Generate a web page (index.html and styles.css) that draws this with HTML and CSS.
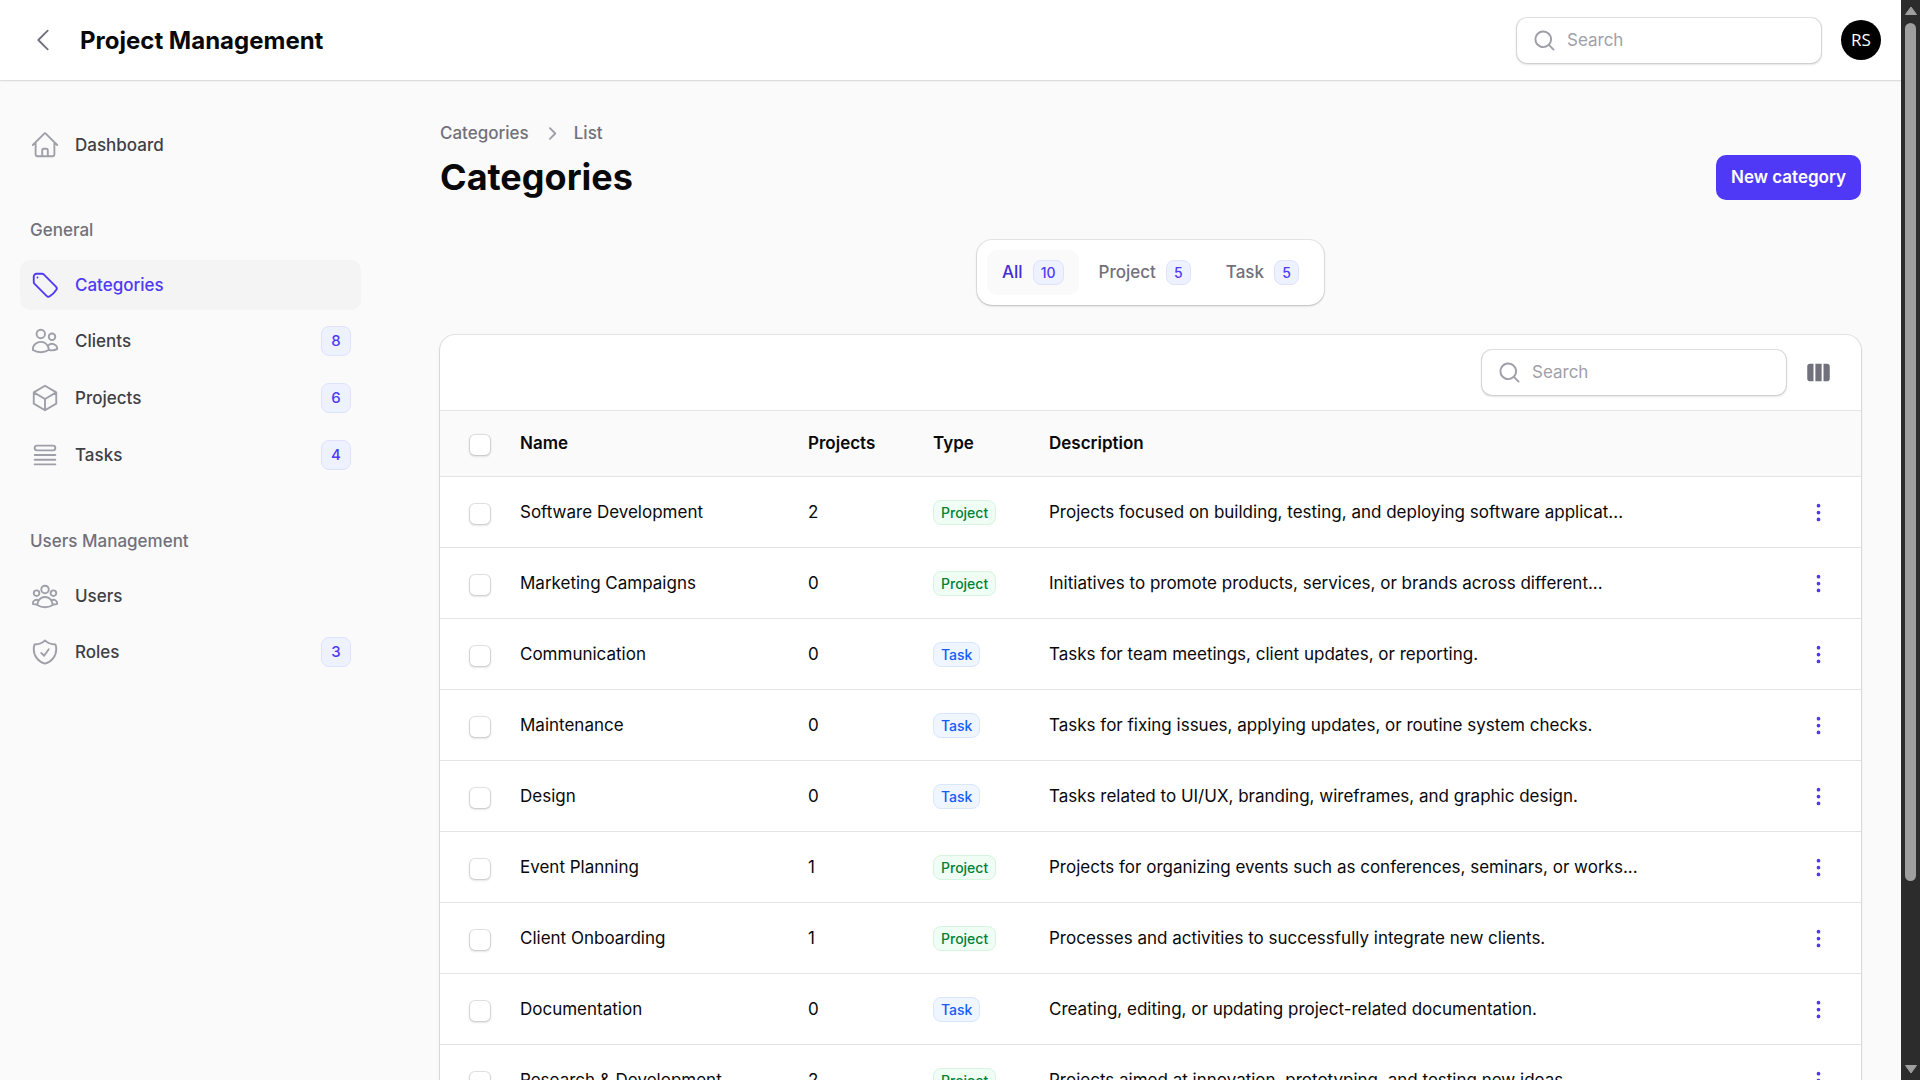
FILE: index.html
```html
<!DOCTYPE html>
<html lang="en">
<head>
<meta charset="utf-8">
<meta name="viewport" content="width=device-width, initial-scale=1">
<title>Categories - Project Management</title>
<link rel="stylesheet" href="styles.css">
</head>
<body>
<svg class="sprite" aria-hidden="true">
  <symbol id="i-search" viewBox="0 0 20 20"><path fill="currentColor" fill-rule="evenodd" d="M9 3.5a5.5 5.5 0 1 0 0 11 5.5 5.5 0 0 0 0-11ZM2 9a7 7 0 1 1 12.452 4.391l3.328 3.329a.75.75 0 1 1-1.06 1.06l-3.329-3.328A7 7 0 0 1 2 9Z"/></symbol>
  <symbol id="i-dots" viewBox="0 0 20 20"><path fill="currentColor" d="M10 3a1.5 1.5 0 1 1 0 3 1.5 1.5 0 0 1 0-3ZM10 8.500a1.500 1.500 0 1 1 0 3 1.500 1.500 0 0 1 0-3ZM11.500 15.500a1.500 1.500 0 1 0-3 0 1.500 1.500 0 0 0 3 0Z"/></symbol>
  <symbol id="i-columns" viewBox="0 0 20 20"><path fill="currentColor" d="M14 17h2.75A2.25 2.25 0 0 0 19 14.75v-9.500A2.250 2.250 0 0 0 16.750 3H14v14ZM12.500 3h-5v14h5V3ZM3.250 3H6v14H3.250A2.250 2.250 0 0 1 1 14.750v-9.500A2.250 2.250 0 0 1 3.250 3Z"/></symbol>
</svg>
<div class="window">
  <div class="viewport">
    <header class="topbar">
      <button class="back" type="button" aria-label="Collapse sidebar"><svg class="icon-lg line" viewBox="0 0 24 24"><path d="M15.750 19.500 8.250 12l7.500-7.500"/></svg></button>
      <a class="brand" href="#">Project Management</a>
      <label class="search"><svg class="icon"><use href="#i-search"/></svg><input type="search" placeholder="Search" aria-label="Global search"></label>
      <button class="avatar" type="button" aria-label="User menu">RS</button>
    </header>
    <div class="layout">
      <nav class="sidebar" aria-label="Main">
        <div class="group">
          <a class="nav-item" href="#"><svg class="icon-lg line" viewBox="0 0 24 24"><path d="m2.250 12 8.954-8.955c.44-.439 1.152-.439 1.591 0L21.750 12M4.500 9.750v10.125c0 .621.504 1.125 1.125 1.125H9.750v-4.875c0-.621.504-1.125 1.125-1.125h2.250c.621 0 1.125.504 1.125 1.125V21h4.125c.621 0 1.125-.504 1.125-1.125V9.750M8.250 21h8.250"/></svg><span>Dashboard</span></a>
        </div>
        <div class="group">
          <h2 class="group-label">General</h2>
          <a class="nav-item active" href="#" aria-current="page"><svg class="icon-lg line" viewBox="0 0 24 24"><path d="M9.568 3H5.250A2.250 2.250 0 0 0 3 5.250v4.318c0 .597.237 1.170.659 1.591l9.581 9.581c.699.699 1.780.872 2.607.330a18.095 18.095 0 0 0 5.223-5.223c.542-.827.369-1.908-.330-2.607L11.160 3.660A2.250 2.250 0 0 0 9.568 3Z"/><path d="M6 6h.008v.008H6V6Z"/></svg><span>Categories</span></a>
          <a class="nav-item counted" href="#"><svg class="icon-lg line" viewBox="0 0 24 24"><path d="M15 19.128a9.380 9.380 0 0 0 2.625.372 9.337 9.337 0 0 0 4.121-.952 4.125 4.125 0 0 0-7.533-2.493M15 19.128v-.003c0-1.113-.285-2.160-.786-3.070M15 19.128v.106A12.318 12.318 0 0 1 8.624 21c-2.331 0-4.512-.645-6.374-1.766l-.001-.109a6.375 6.375 0 0 1 11.964-3.070M12 6.375a3.375 3.375 0 1 1-6.750 0 3.375 3.375 0 0 1 6.750 0Zm8.250 2.250a2.625 2.625 0 1 1-5.250 0 2.625 2.625 0 0 1 5.250 0Z"/></svg><span>Clients</span><span class="count">8</span></a>
          <a class="nav-item counted" href="#"><svg class="icon-lg line" viewBox="0 0 24 24"><path d="m21 7.500-9-5.250L3 7.500m18 0-9 5.250m9-5.250v9l-9 5.250M3 7.500l9 5.250M3 7.500v9l9 5.250m0-9v9"/></svg><span>Projects</span><span class="count">6</span></a>
          <a class="nav-item counted" href="#"><svg class="icon-lg line" viewBox="0 0 24 24"><path d="M3.750 12h16.500m-16.500 3.750h16.500M3.750 19.500h16.500M5.625 4.500h12.750a1.875 1.875 0 0 1 0 3.750H5.625a1.875 1.875 0 0 1 0-3.750Z"/></svg><span>Tasks</span><span class="count">4</span></a>
        </div>
        <div class="group">
          <h2 class="group-label">Users Management</h2>
          <a class="nav-item" href="#"><svg class="icon-lg line" viewBox="0 0 24 24"><path d="M18 18.720a9.094 9.094 0 0 0 3.741-.479 3 3 0 0 0-4.682-2.720m.940 3.198.001.031c0 .225-.012.447-.037.666A11.944 11.944 0 0 1 12 21c-2.170 0-4.207-.576-5.963-1.584A6.062 6.062 0 0 1 6 18.719m12 0a5.971 5.971 0 0 0-.941-3.197m0 0A5.995 5.995 0 0 0 12 12.750a5.995 5.995 0 0 0-5.058 2.772m0 0a3 3 0 0 0-4.681 2.720 8.986 8.986 0 0 0 3.740.477m.940-3.197a5.971 5.971 0 0 0-.940 3.197M15 6.750a3 3 0 1 1-6 0 3 3 0 0 1 6 0Zm6 3a2.250 2.250 0 1 1-4.500 0 2.250 2.250 0 0 1 4.500 0Zm-13.500 0a2.250 2.250 0 1 1-4.500 0 2.250 2.250 0 0 1 4.500 0Z"/></svg><span>Users</span></a>
          <a class="nav-item counted" href="#"><svg class="icon-lg line" viewBox="0 0 24 24"><path d="M9 12.750 11.250 15 15 9.750m-3-7.036A11.959 11.959 0 0 1 3.598 6 11.990 11.990 0 0 0 3 9.749c0 5.592 3.824 10.290 9 11.623 5.176-1.332 9-6.030 9-11.622 0-1.310-.210-2.571-.598-3.751h-.152c-3.196 0-6.100-1.248-8.250-3.285Z"/></svg><span>Roles</span><span class="count">3</span></a>
        </div>
      </nav>
      <main class="content">
        <div class="page-head">
          <div>
            <nav class="crumbs" aria-label="Breadcrumb"><a href="#">Categories</a><svg class="icon crumb-sep" viewBox="0 0 20 20"><path fill="currentColor" fill-rule="evenodd" d="M8.220 5.220a.750.750 0 0 1 1.060 0l4.250 4.250a.750.750 0 0 1 0 1.060l-4.250 4.250a.750.750 0 0 1-1.060-1.060L11.940 10 8.220 6.280a.750.750 0 0 1 0-1.060Z"/></svg><a href="#">List</a></nav>
            <h1 class="title">Categories</h1>
          </div>
          <button class="primary" type="button">New category</button>
        </div>
        <div class="tabs" role="tablist">
          <button class="tab selected" type="button" role="tab" aria-selected="true">All <span class="badge">10</span></button>
          <button class="tab" type="button" role="tab" aria-selected="false">Project <span class="badge">5</span></button>
          <button class="tab" type="button" role="tab" aria-selected="false">Task <span class="badge">5</span></button>
        </div>
        <section class="card">
          <div class="toolbar">
            <label class="search"><svg class="icon"><use href="#i-search"/></svg><input type="search" placeholder="Search" aria-label="Search categories"></label>
            <button class="icon-btn muted" type="button" aria-label="Toggle columns"><svg class="icon"><use href="#i-columns"/></svg></button>
          </div>
          <table class="table">
            <colgroup><col class="c-check"><col class="c-name"><col class="c-projects"><col class="c-type"><col><col class="c-actions"></colgroup>
            <thead><tr><th><input type="checkbox" aria-label="Select all"></th><th>Name</th><th>Projects</th><th>Type</th><th>Description</th><th></th></tr></thead>
            <tbody>
              <tr><td><input type="checkbox" aria-label="Select Software Development"></td><td>Software Development</td><td>2</td><td><span class="badge green">Project</span></td><td>Projects focused on building, testing, and deploying software applicat...</td><td><button class="icon-btn" type="button" aria-label="Actions"><svg class="icon"><use href="#i-dots"/></svg></button></td></tr>
              <tr><td><input type="checkbox" aria-label="Select Marketing Campaigns"></td><td>Marketing Campaigns</td><td>0</td><td><span class="badge green">Project</span></td><td>Initiatives to promote products, services, or brands across different...</td><td><button class="icon-btn" type="button" aria-label="Actions"><svg class="icon"><use href="#i-dots"/></svg></button></td></tr>
              <tr><td><input type="checkbox" aria-label="Select Communication"></td><td>Communication</td><td>0</td><td><span class="badge blue">Task</span></td><td>Tasks for team meetings, client updates, or reporting.</td><td><button class="icon-btn" type="button" aria-label="Actions"><svg class="icon"><use href="#i-dots"/></svg></button></td></tr>
              <tr><td><input type="checkbox" aria-label="Select Maintenance"></td><td>Maintenance</td><td>0</td><td><span class="badge blue">Task</span></td><td>Tasks for fixing issues, applying updates, or routine system checks.</td><td><button class="icon-btn" type="button" aria-label="Actions"><svg class="icon"><use href="#i-dots"/></svg></button></td></tr>
              <tr><td><input type="checkbox" aria-label="Select Design"></td><td>Design</td><td>0</td><td><span class="badge blue">Task</span></td><td>Tasks related to UI/UX, branding, wireframes, and graphic design.</td><td><button class="icon-btn" type="button" aria-label="Actions"><svg class="icon"><use href="#i-dots"/></svg></button></td></tr>
              <tr><td><input type="checkbox" aria-label="Select Event Planning"></td><td>Event Planning</td><td>1</td><td><span class="badge green">Project</span></td><td>Projects for organizing events such as conferences, seminars, or works...</td><td><button class="icon-btn" type="button" aria-label="Actions"><svg class="icon"><use href="#i-dots"/></svg></button></td></tr>
              <tr><td><input type="checkbox" aria-label="Select Client Onboarding"></td><td>Client Onboarding</td><td>1</td><td><span class="badge green">Project</span></td><td>Processes and activities to successfully integrate new clients.</td><td><button class="icon-btn" type="button" aria-label="Actions"><svg class="icon"><use href="#i-dots"/></svg></button></td></tr>
              <tr><td><input type="checkbox" aria-label="Select Documentation"></td><td>Documentation</td><td>0</td><td><span class="badge blue">Task</span></td><td>Creating, editing, or updating project-related documentation.</td><td><button class="icon-btn" type="button" aria-label="Actions"><svg class="icon"><use href="#i-dots"/></svg></button></td></tr>
              <tr><td><input type="checkbox" aria-label="Select Research &amp; Development"></td><td>Research &amp; Development</td><td>2</td><td><span class="badge green">Project</span></td><td>Projects aimed at innovation, prototyping, and testing new ideas.</td><td><button class="icon-btn" type="button" aria-label="Actions"><svg class="icon"><use href="#i-dots"/></svg></button></td></tr>
            </tbody>
          </table>
        </section>
      </main>
    </div>
  </div>
  <div class="scrollbar" aria-hidden="true">
    <svg class="arrow" viewBox="0 0 14 10"><path d="M7 1 12.500 8.500H1.500Z"/></svg>
    <div class="track"><div class="thumb"></div></div>
    <svg class="arrow" viewBox="0 0 14 10"><path d="M7 9 12.500 1.500H1.500Z"/></svg>
  </div>
</div>
</body>
</html>
```
FILE: styles.css
```css
*, *::before, *::after { box-sizing: border-box; }

:root {
  --ink: #09090b;
  --gray-700: #3f3f46;
  --gray-500: #71717b;
  --gray-400: #9f9fa9;
  --line: #e4e4e5;
  --surface: #fafafa;
  --primary: #4f39f6;
  --ring: 0 0 0 1px rgba(9, 9, 11, .08), 0 1px 3px rgba(0, 0, 0, .1), 0 1px 2px rgba(0, 0, 0, .1);
}

body {
  margin: 0;
  background: var(--surface);
  color: var(--ink);
  font: 400 17px/25px Inter, "Liberation Sans", sans-serif;
}

a { color: inherit; text-decoration: none; }
button, input { font: inherit; color: inherit; }
button { border: 0; padding: 0; background: none; cursor: pointer; }
h1, h2 { margin: 0; }

.sprite { display: none; }
.icon { width: 25px; height: 25px; flex: none; display: block; }
.icon-lg { width: 30px; height: 30px; flex: none; display: block; }
.line { fill: none; stroke: currentColor; stroke-width: 1.5; stroke-linecap: round; stroke-linejoin: round; }

.window { display: flex; height: 100vh; }
.viewport { flex: 1; min-width: 0; overflow-y: auto; scrollbar-width: none; }

/* Top bar */
.topbar {
  display: flex;
  align-items: center;
  height: 80px;
  padding: 0 20px 0 28px;
  background: #fff;
  box-shadow: 0 0 0 1px rgba(9, 9, 11, .05), 0 1px 2px rgba(0, 0, 0, .1);
}
.back { color: var(--gray-500); margin-right: 22px; }
.brand { flex: 1; font-size: 24px; font-weight: 700; }
.search {
  display: flex;
  align-items: center;
  gap: 10px;
  width: 304px;
  height: 45px;
  padding: 0 15px;
  border-radius: 10px;
  background: #fff;
  color: var(--gray-400);
  box-shadow: 0 0 0 1px rgba(9, 9, 11, .1), 0 1px 2px 1px rgba(0, 0, 0, .1);
}
.search input { flex: 1; min-width: 0; padding: 0; border: 0; outline: 0; background: none; color: var(--ink); }
.search input::placeholder { color: var(--gray-400); opacity: 1; }
.avatar {
  width: 40px;
  height: 40px;
  margin-left: 20px;
  border-radius: 50%;
  background: #000;
  color: #fff;
  font: 400 17px/40px "Open Sans", sans-serif;
}

.layout { display: flex; }

/* Sidebar */
.sidebar { width: 400px; flex: none; display: flex; flex-direction: column; gap: 35px; padding: 40px 39px 40px 20px; }
.group { display: flex; flex-direction: column; gap: 5px; }
.group-label { height: 50px; padding: 0 10px; font-size: 17px; line-height: 50px; font-weight: 500; color: var(--gray-500); }
.nav-item { display: flex; align-items: center; gap: 15px; height: 50px; padding: 0 10px; border-radius: 10px; color: var(--gray-700); font-weight: 500; }
.nav-item.counted { height: 52px; }
.nav-item .icon-lg { color: var(--gray-400); }
.nav-item.active { background: #f4f4f5; color: var(--primary); }
.nav-item.active .icon-lg { color: var(--primary); }
.count, .badge {
  border: 1px solid #dfe2ff;
  border-radius: 8px;
  background: #eef2ff;
  color: var(--primary);
  font-size: 15px;
  font-weight: 500;
  text-align: center;
}
.count { width: 30px; height: 30px; line-height: 28px; margin-left: auto; }

/* Page */
.content { flex: 1; min-width: 0; padding: 40px; display: flex; flex-direction: column; }
.page-head { display: flex; justify-content: space-between; align-items: center; }
.crumbs { display: flex; align-items: center; gap: 10px; color: var(--gray-500); font-weight: 500; line-height: 27px; }
.crumb-sep { color: var(--gray-400); }
.title { margin-top: 8px; font-size: 36px; line-height: 45px; font-weight: 700; }
.primary { align-self: flex-end; height: 45px; padding: 0 15px; border-radius: 10px; background: var(--primary); color: #fff; font-weight: 600; }

.tabs { align-self: center; display: flex; gap: 5px; margin: 40px 0 30px; padding: 10px; border-radius: 15px; background: #fff; box-shadow: var(--ring); }
.tab { display: flex; align-items: center; gap: 10px; height: 45px; padding: 0 15px; border-radius: 10px; color: var(--gray-500); font-weight: 500; }
.tab.selected { background: var(--surface); color: #432dd7; }
.badge { display: inline-block; min-width: 25px; height: 25px; padding: 0 7px; font-size: 14px; line-height: 23px; }
.badge.green { border-color: #d5f5e0; background: #f0fdf4; color: #008236; }
.badge.blue { border-color: #d8e7ff; background: #eff6ff; color: #155dfc; }

/* Table */
.card { border-radius: 15px; background: #fff; box-shadow: var(--ring); overflow: hidden; }
.toolbar { display: flex; align-items: center; justify-content: flex-end; gap: 10px; padding: 15px 20px; }
.icon-btn { display: flex; align-items: center; justify-content: center; width: 45px; height: 45px; color: var(--primary); }
.icon-btn.muted { color: var(--gray-500); }
.table { width: 100%; table-layout: fixed; border-collapse: collapse; }
.c-check { width: 65px; }
.c-name { width: 288px; }
.c-projects { width: 125px; }
.c-type { width: 116px; }
.c-actions { width: 65px; }
.table th, .table td { padding: 0 15px; border-top: 1px solid var(--line); text-align: left; white-space: nowrap; }
.table th { height: 66px; background: var(--surface); font-weight: 600; }
.table td { height: 71px; }
.table th:first-child, .table td:first-child { padding: 0 0 0 30px; }
.table td:last-child { padding: 0; }
.table input[type="checkbox"] {
  appearance: none;
  display: block;
  width: 20px;
  height: 20px;
  margin: 3px 0 0;
  border-radius: 5px;
  background: #fff;
  box-shadow: 0 0 0 1px rgba(9, 9, 11, .1), 0 1px 2px 1px rgba(0, 0, 0, .1);
}
.table input[type="checkbox"]:checked { background: var(--primary); }

/* Window scrollbar */
.scrollbar { flex: none; width: 19px; display: flex; flex-direction: column; align-items: center; padding: 6px 0; background: #2c2c2c; }
.arrow { width: 14px; height: 10px; flex: none; fill: #9f9f9f; stroke: #9f9f9f; stroke-linejoin: round; }
.track { flex: 1; width: 11px; padding: 7px 0; }
.thumb { height: 83%; border-radius: 6px; background: #9f9f9f; }
```
